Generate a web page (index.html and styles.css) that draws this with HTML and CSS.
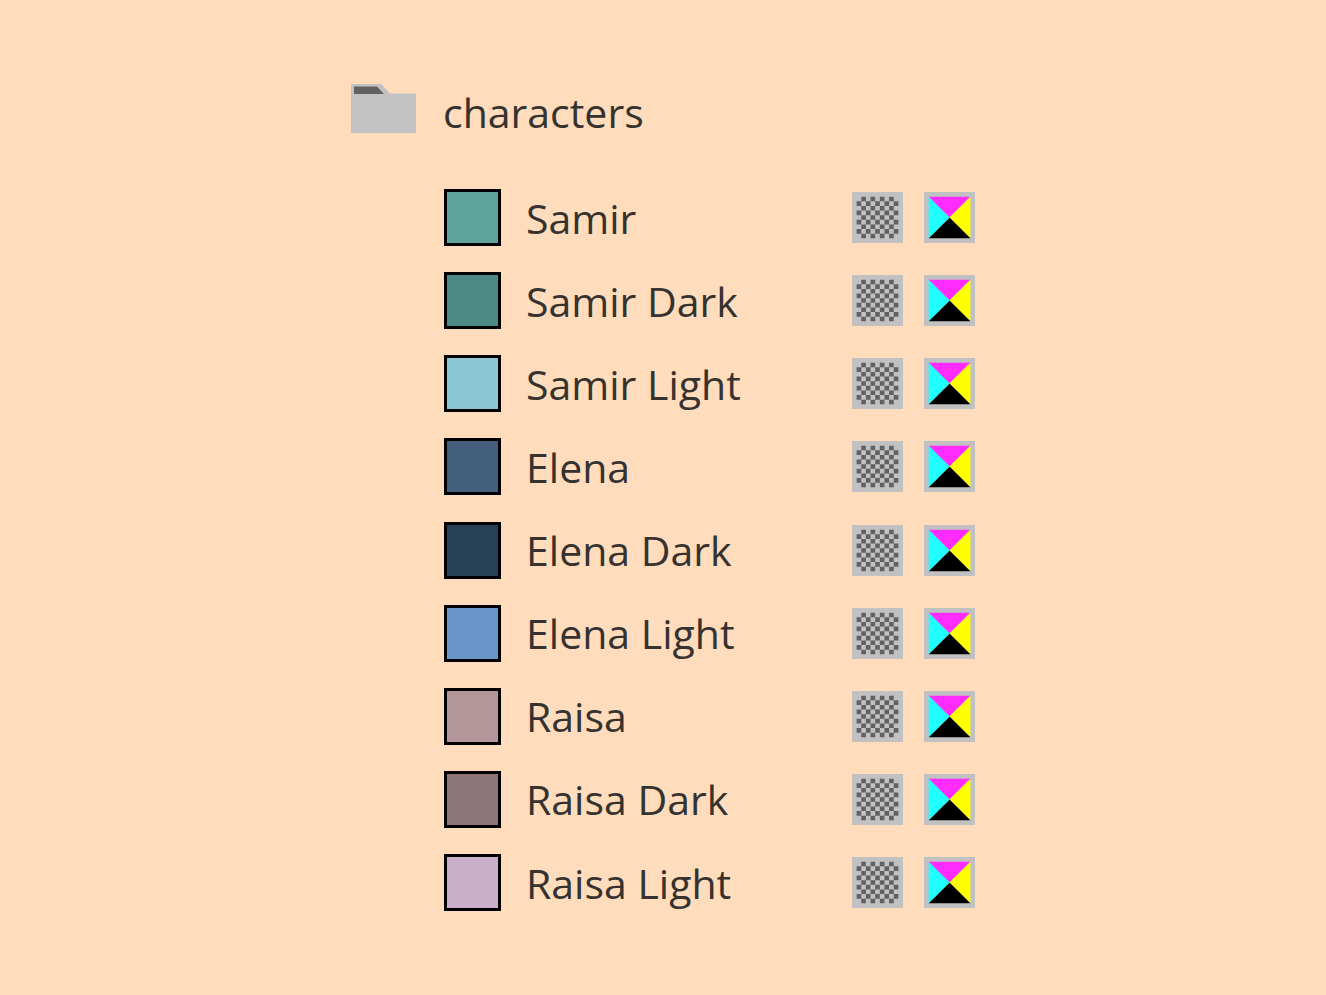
FILE: index.html
```
<!DOCTYPE html>
<html lang="en">
<head>
    <meta charset="UTF-8" />
    <meta name="viewport" content="width=device-width, initial-scale=1.0"/>
    <title>characters</title>
    <link rel="stylesheet" href="styles.css">
</head>
<body>
<svg class="symbols" aria-hidden="true">
    <defs>
        <symbol id="global" viewBox="0 0 11 11">
            <rect width="11" height="11" fill="#c1c1c1"/>
            <path d="M2 1.500h7M1 2.500h9M2 3.500h7M1 4.500h9M2 5.500h7M1 6.500h9M2 7.500h7M1 8.500h9M2 9.500h7" stroke="#616161" stroke-dasharray="1"/>
        </symbol>
        <symbol id="cmyk" viewBox="0 0 11 11">
            <rect width="11" height="11" fill="#c1c1c1"/>
            <path d="M1 1h9L5.5 5.5z" fill="#ff2bff"/>
            <path d="M10 1v9L5.5 5.5z" fill="#ffff00"/>
            <path d="M10 10h-9L5.5 5.5z" fill="#000"/>
            <path d="M1 10v-9L5.5 5.5z" fill="#20ffff"/>
        </symbol>
    </defs>
</svg>

<main class="panel">
    <header class="group">
        <svg class="folder" viewBox="0 0 65 49" aria-hidden="true">
            <path d="M0 0h30l9 9.500h26v39.500h-65z" fill="#c2c2c2"/>
            <path d="M3 2.500h23l7 7.500h-30z" fill="#616161"/>
        </svg>
        <h1>characters</h1>
    </header>
    <ul class="swatches" id="swatches"></ul>
</main>

<script>
    const swatches = [
      { name: 'Samir', color: '#60a39c' },
      { name: 'Samir Dark', color: '#4d8a85' },
      { name: 'Samir Light', color: '#8ac6d3' },
      { name: 'Elena', color: '#445f7c' },
      { name: 'Elena Dark', color: '#264055' },
      { name: 'Elena Light', color: '#6996c8' },
      { name: 'Raisa', color: '#b29699' },
      { name: 'Raisa Dark', color: '#8d757a' },
      { name: 'Raisa Light', color: '#c9b0c8' }
    ];

    const list = document.getElementById('swatches');
    swatches.forEach(({ name, color }) => {
      const row = document.createElement('li');
      row.classList.add('swatch');

      row.innerHTML = `
        <span class="chip" style="background-color: ${color}"></span>
        <span class="name">${name}</span>
        <svg class="mode" aria-hidden="true"><use href="#global"/></svg>
        <svg class="mode" aria-hidden="true"><use href="#cmyk"/></svg>
      `;

      list.appendChild(row);
    });
</script>
</body>
</html>
```

FILE: styles.css
```
body {
  margin: 0;
  font-family: "Open Sans", sans-serif;
  font-size: 41px;
  font-weight: 500;
  color: #35322f;
  background-color: #ffdcbb;
}

.symbols {
  position: absolute;
  width: 0;
  height: 0;
}

.panel {
  display: flex;
  flex-direction: column;
  gap: 49px;
  box-sizing: border-box;
  width: 100%;
  max-width: 624px;
  min-height: 100vh;
  margin: 0 auto;
  padding: 84px 0;
}

.group {
  display: flex;
  align-items: flex-start;
  gap: 27px;
}

.group h1 {
  margin: 0;
  font-size: 41px;
  font-weight: 500;
  line-height: 56px;
}

.folder {
  width: 65px;
  height: 49px;
}

.swatches {
  display: flex;
  flex: 1;
  flex-direction: column;
  justify-content: space-between;
  margin: 0;
  padding: 0 0 0 93px;
  list-style: none;
}

.swatch {
  display: flex;
  align-items: center;
  gap: 21px;
}

.chip {
  box-sizing: border-box;
  width: 57px;
  height: 57px;
  border: 3px solid #000;
}

.name {
  flex: 1;
  padding-left: 4px;
  line-height: 56px;
}

.mode {
  width: 51px;
  height: 51px;
}
```
